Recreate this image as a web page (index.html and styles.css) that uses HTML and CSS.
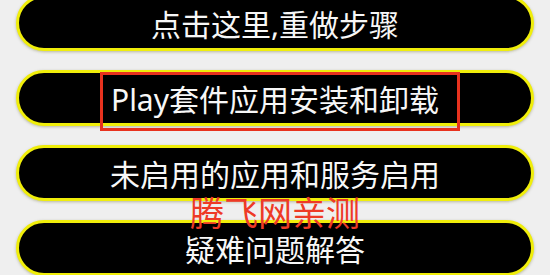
FILE: index.html
```html
<!DOCTYPE html>
<html lang="zh-CN">

<head>
    <meta charset="UTF-8">
    <title>Play 应用帮助</title>
    <link rel="stylesheet" href="styles.css">
</head>

<body>
    <div class="menu">
        <div class="pill">点击这里,重做步骤</div>
        <div class="pill">Play套件应用安装和卸载</div>
        <div class="pill">未启用的应用和服务启用</div>
        <div class="pill">疑难问题解答</div>
    </div>
    <div class="highlight"></div>
    <div class="watermark">腾飞网亲测</div>
</body>

</html>
```

FILE: styles.css
```css
body {
    font-family: "Noto Sans", "Noto Sans CJK SC", sans-serif;
    background-color: #efefef;
    margin: 0;
    width: 550px;
    height: 275px;
    overflow: hidden;
    position: relative;
}

.menu {
    display: flex;
    flex-direction: column;
    gap: 19px;
    margin-top: -5px;
    padding: 0 16px 0 16px;
}

.pill {
    height: 50px;
    border: 3px solid #f0ee0a;
    border-radius: 28px;
    background-color: #000;
    color: #f7f7f7;
    font-size: 30px;
    display: flex;
    justify-content: center;
    align-items: center;
    box-shadow: 0 1px 3px rgba(80, 80, 0, 0.35);
}

.highlight {
    position: absolute;
    left: 100px;
    top: 72px;
    width: 354px;
    height: 53px;
    border: 3px solid #e8321e;
}

.watermark {
    position: absolute;
    left: 190px;
    top: 191px;
    font-size: 34px;
    line-height: 44px;
    color: #ee3a26;
}
```
